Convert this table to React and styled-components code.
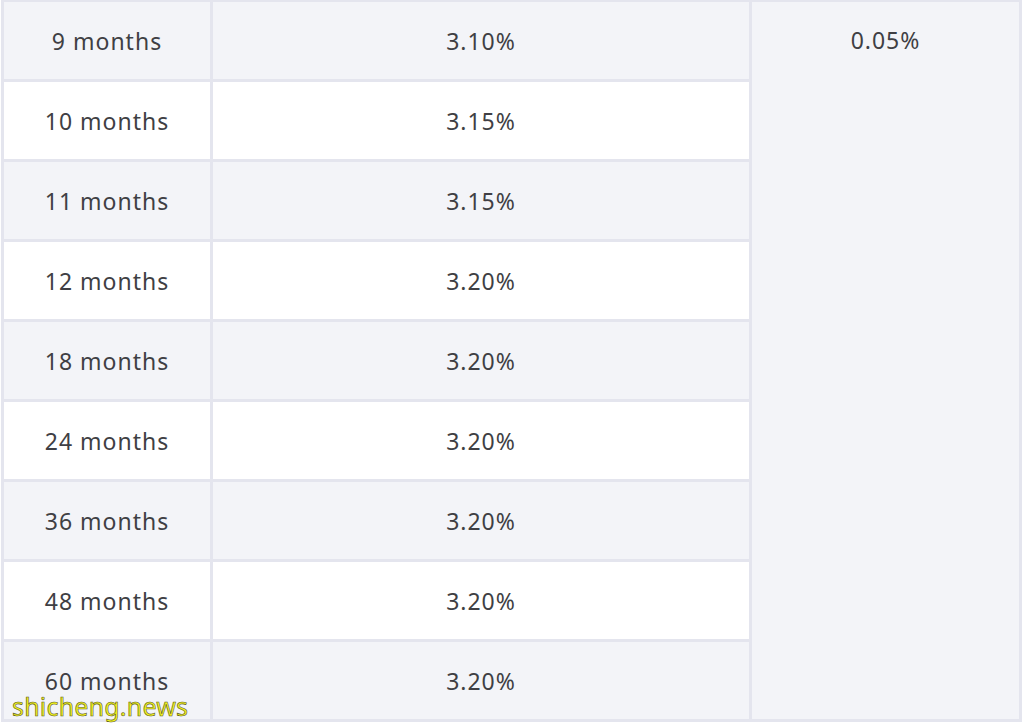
import styled, { createGlobalStyle } from "styled-components"

const rows = [
    { term: "9 months", rate: "3.10%" },
    { term: "10 months", rate: "3.15%" },
    { term: "11 months", rate: "3.15%" },
    { term: "12 months", rate: "3.20%" },
    { term: "18 months", rate: "3.20%" },
    { term: "24 months", rate: "3.20%" },
    { term: "36 months", rate: "3.20%" },
    { term: "48 months", rate: "3.20%" },
    { term: "60 months", rate: "3.20%" },
]

export default function App() {
    return (
        <>
            <GlobalStyle />
            <Page>
                <RateTable>
                    <tbody>
                        {rows.map((r, i) => (
                            <Row key={r.term} $shaded={i % 2 === 0}>
                                <TermCell>{r.term}</TermCell>
                                <RateCell>{r.rate}</RateCell>
                                {i === 0 && <BonusCell rowSpan={rows.length}>0.05%</BonusCell>}
                            </Row>
                        ))}
                    </tbody>
                </RateTable>
                <Watermark>shicheng.news</Watermark>
            </Page>
        </>
    )
}

const GlobalStyle = createGlobalStyle`
body{
    margin:0;
    background:#fff;
    font-family:"Noto Sans", "Open Sans", sans-serif;
}
`

const Page = styled.div`
position:relative;
width:1024px;
height:728px;
overflow:hidden;
padding:0 2px 0 1px;
box-sizing:border-box;
`

const RateTable = styled.table`
width:100%;
border-collapse:collapse;
margin-top:-1px;
color:#3f3f44;
font-size:23px;
letter-spacing:1px;
`

const Row = styled.tr`
background:${p => p.$shaded ? '#f3f4f8' : '#fff'};
`

const Cell = styled.td`
border:3px solid #e4e5ee;
text-align:center;
vertical-align:middle;
height:77px;
padding:0;
`

const TermCell = styled(Cell)`
width:206px;
`

const RateCell = styled(Cell)`
width:536px;
`

const BonusCell = styled(Cell)`
background:#f3f4f8;
vertical-align:top;
padding-top:22px;
`

const Watermark = styled.div`
position:absolute;
left:12px;
top:689px;
font-size:25px;
color:#f2f21e;
-webkit-text-stroke:0.6px #5a5a20;
letter-spacing:0.2px;
`
